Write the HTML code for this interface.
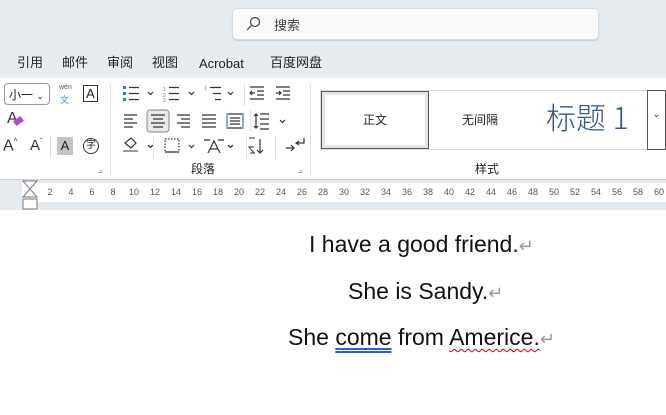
<!DOCTYPE html>
<html><head><meta charset="utf-8"><style>
*{margin:0;padding:0;box-sizing:border-box}
body{width:666px;height:415px;overflow:hidden;background:#fff;font-family:"Liberation Sans","Noto Sans CJK SC",sans-serif;position:relative;color:#222}
.a{position:absolute}
.top{left:0;top:0;width:666px;height:78px;background:#e6ecef}
.search{left:232px;top:8px;width:367px;height:32px;background:#fafafa;border:1px solid #d8dcdf;border-radius:5px;box-shadow:0 1px 1px #ccc}
.tab{top:54px;font-size:13px;color:#222;line-height:18px}
.ribbon{left:0;top:78px;width:666px;height:102px;background:#fff;border-bottom:1px solid #d0d4d8}
.ruler{left:0;top:180px;width:666px;height:30px;background:#e6ebef}
.rw{left:22px;top:183px;width:644px;height:19px;background:#fff}
.rn{top:187px;font-size:9px;color:#555;width:20px;text-align:center;margin-left:-10px}
.doc{font-size:23px;color:#111;white-space:nowrap}
.pm{color:#999;font-size:18px}
.sep{width:1px;background:#ddd}
</style></head><body>
<div class="a top"></div>
<div class="a search"><svg class="a" style="left:12px;top:7px" width="16" height="16"><circle cx="10" cy="6" r="4.5" fill="none" stroke="#444" stroke-width="1.2"/><line x1="6.5" y1="9.5" x2="2" y2="14" stroke="#444" stroke-width="1.2"/></svg><span class="a" style="left:41px;top:6px;font-size:13px;color:#444">搜索</span></div>
<span class="a tab" style="left:17px">引用</span>
<span class="a tab" style="left:62px">邮件</span>
<span class="a tab" style="left:107px">审阅</span>
<span class="a tab" style="left:152px">视图</span>
<span class="a tab" style="left:199px;top:55px">Acrobat</span>
<span class="a tab" style="left:270px">百度网盘</span>
<div class="a ribbon"></div>
<div class="a" style="left:4px;top:83px;width:46px;height:22px;border:1px solid #999;border-radius:4px;font-size:12px;padding:2px 4px">小一 <span style="font-size:9px">⌄</span></div>
<span class="a" style="left:59px;top:84px;font-size:7px;color:#555">wén</span><span class="a" style="left:60px;top:93px;font-size:9px;color:#3a8ed8">文</span>
<div class="a" style="left:83px;top:85px;width:15px;height:17px;border:1px solid #333;font-size:13px;text-align:center;line-height:15px">A</div>
<span class="a" style="left:7px;top:110px;font-size:16px;color:#333">A</span><span class="a" style="left:14px;top:118px;width:9px;height:6px;background:#b14ac8;transform:rotate(-35deg)"></span>
<span class="a" style="left:3px;top:137px;font-size:16px;color:#333">A<sup style="font-size:8px">^</sup></span>
<span class="a" style="left:30px;top:137px;font-size:15px;color:#333">A<sup style="font-size:8px">ˇ</sup></span>
<div class="a sep" style="left:50px;top:136px;height:22px"></div>
<div class="a" style="left:57px;top:137px;width:16px;height:18px;background:#c4c4c4;font-size:13px;text-align:center;line-height:18px">A</div>
<div class="a" style="left:83px;top:138px;width:16px;height:16px;border:1.3px solid #333;border-radius:50%;font-size:10px;text-align:center;line-height:14px">字</div>
<span class="a" style="left:98px;top:164px;font-size:9px;color:#555">⌟</span>
<div class="a sep" style="left:110px;top:84px;height:90px"></div>
<svg class="a" style="left:120px;top:83px" width="190" height="80" stroke="#333" stroke-width="1.2" fill="none">
<g fill="#2a7fd4" stroke="none"><rect x="3" y="3" width="3" height="3"/><rect x="3" y="9" width="3" height="3"/><rect x="3" y="15" width="3" height="3"/></g>
<path d="M9 4.5h10M9 10.5h10M9 16.5h10"/><path d="M28 9l2.5 2.5 2.5-2.5M69 9l2.5 2.5 2.5-2.5M108 9l2.5 2.5 2.5-2.5"/>
<path d="M49 4.5h10M49 10.5h10M49 16.5h10"/><text x="43" y="8" font-size="5" fill="#2a7fd4" stroke="none">1</text><text x="43" y="14" font-size="5" fill="#2a7fd4" stroke="none">2</text><text x="43" y="19" font-size="5" fill="#2a7fd4" stroke="none">3</text>
<path d="M90 4.5h11M93 10.5h8M95 16.5h6"/><text x="84" y="7" font-size="5" fill="#2a7fd4" stroke="none">1</text>
<path d="M130 4h14M137 8h7M137 12h7M130 16h14M135 10h-5M132 8l-2 2 2 2" />
<path d="M156 4h14M163 8h7M163 12h7M156 16h14M156 10h5M159 8l2 2-2 2"/>
<path d="M4 32h13M4 36h9M4 40h13M4 44h9"/>
<rect x="27" y="27" width="22" height="22" rx="3" fill="#e8e8e8" stroke="#999"/><path d="M31 32h14M33 36h10M31 40h14M33 44h10"/>
<path d="M57 32h13M61 36h9M57 40h13M61 44h9M82 32h14M82 36h14M82 40h14M82 44h14"/>
<path d="M108 31h14M108 45h14M110 38h10"/><path d="M107 30v16M123 30v16" stroke="#2a7fd4"/><path d="M110 35h10M110 41h10"/>
<path d="M140 31h9M140 36h9M140 41h9M140 46h9M136 31v14M134 33l2-2 2 2M134 43l2 2 2-2"/><path d="M160 37l2.5 2.5 2.5-2.5"/>
<path d="M28 62l2.5 2.5 2.5-2.5M69 62l2.5 2.5 2.5-2.5M108 62l2.5 2.5 2.5-2.5"/>
<path d="M5 60l6-5 5 5-5 5z"/><rect x="3" y="67" width="15" height="2" fill="#999" stroke="none"/>
<rect x="45" y="56" width="14" height="13" stroke="#333" stroke-dasharray="1.5 1.5"/><path d="M45 69h14"/>
<path d="M88 70l6-12 6 12M90 66h8M84 57h6M98 57h6"/><path d="M129 55h6M130 70h5M134 70l-5-6 5 0" stroke-width="1"/><path d="M140 56v14M137 67l3 3 3-3"/>
<path d="M166 65h8M171 62l3 3-3 3M184 55v5h-8M179 58l-3 2 3 2"/>
</svg>
<div class="a sep" style="left:153px;top:136px;height:22px"></div>
<div class="a sep" style="left:244px;top:84px;height:22px"></div>
<div class="a sep" style="left:246px;top:136px;height:22px"></div>
<div class="a sep" style="left:250px;top:110px;height:22px"></div>
<div class="a sep" style="left:275px;top:136px;height:22px"></div>
<span class="a" style="left:191px;top:160px;font-size:12px">段落</span>
<span class="a" style="left:298px;top:164px;font-size:9px;color:#555">⌟</span>
<div class="a sep" style="left:310px;top:84px;height:90px"></div>
<div class="a" style="left:320px;top:90px;width:346px;height:60px;border:1px solid #ddd;border-radius:3px"></div>
<div class="a" style="left:321px;top:91px;width:108px;height:58px;border:1px solid #555;outline:3px solid #e6e6e6;outline-offset:-4px;font-size:12px;text-align:center;line-height:56px">正文</div>
<span class="a" style="left:462px;top:111px;font-size:12px;color:#222">无间隔</span>
<span class="a" style="left:546px;top:97px;font-size:30px;color:#2f5597;font-family:'Noto Sans CJK SC',sans-serif;font-weight:300;line-height:38px">标题 1</span>
<div class="a" style="left:647px;top:90px;width:19px;height:60px;border:1px solid #555;font-size:9px;text-align:center;padding-top:18px;background:#fff">⌄</div>
<span class="a" style="left:475px;top:160px;font-size:12px">样式</span>
<div class="a ruler"></div>
<div class="a rw"></div>
<svg class="a" style="left:22px;top:180px" width="16" height="30" fill="#fff" stroke="#777"><path d="M1 1h14L8 9zM8 9L1 17h14z"/><rect x="1" y="19" width="14" height="10"/></svg>
<span class="a rn" style="left:50px">2</span><span class="a rn" style="left:71px">4</span><span class="a rn" style="left:92px">6</span><span class="a rn" style="left:113px">8</span><span class="a rn" style="left:134px">10</span><span class="a rn" style="left:155px">12</span><span class="a rn" style="left:176px">14</span><span class="a rn" style="left:197px">16</span><span class="a rn" style="left:218px">18</span><span class="a rn" style="left:239px">20</span><span class="a rn" style="left:260px">22</span><span class="a rn" style="left:281px">24</span><span class="a rn" style="left:302px">26</span><span class="a rn" style="left:323px">28</span><span class="a rn" style="left:344px">30</span><span class="a rn" style="left:365px">32</span><span class="a rn" style="left:386px">34</span><span class="a rn" style="left:407px">36</span><span class="a rn" style="left:428px">38</span><span class="a rn" style="left:449px">40</span><span class="a rn" style="left:470px">42</span><span class="a rn" style="left:491px">44</span><span class="a rn" style="left:512px">46</span><span class="a rn" style="left:533px">48</span><span class="a rn" style="left:554px">50</span><span class="a rn" style="left:575px">52</span><span class="a rn" style="left:596px">54</span><span class="a rn" style="left:617px">56</span><span class="a rn" style="left:638px">58</span><span class="a rn" style="left:659px">60</span>
<div class="a doc" style="left:309px;top:231px">I have a good friend.<span class="pm">↵</span></div>
<div class="a doc" style="left:348px;top:278px">She is Sandy.<span class="pm">↵</span></div>
<div class="a doc" style="left:288px;top:324px">She <span style="text-decoration:underline double #2a5fd8;text-underline-offset:3px">come</span> from <span style="text-decoration:underline wavy #d00;text-decoration-thickness:1px;text-underline-offset:3px">Americe.</span><span class="pm">↵</span></div>
</body></html>
